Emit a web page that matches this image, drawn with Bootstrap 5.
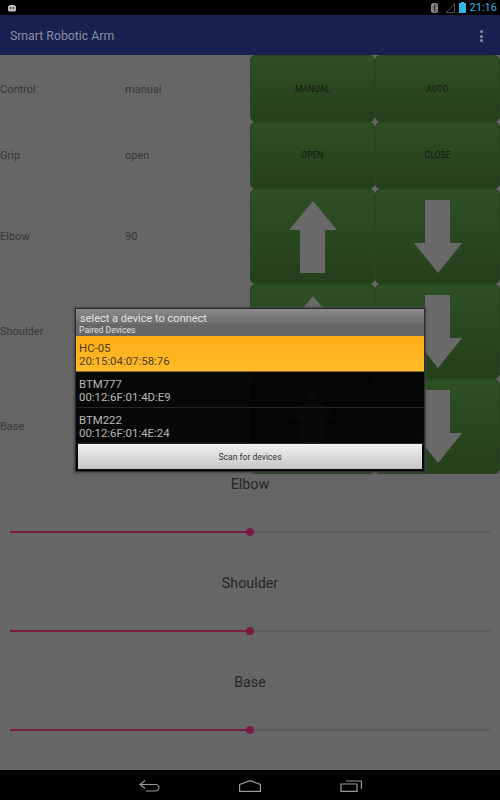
<!DOCTYPE html>
<html lang="en">
<head>
  <meta charset="UTF-8">
  <title>Smart Robotic Arm</title>
  <link href="https://cdn.jsdelivr.net/npm/bootstrap@5.3.0/dist/css/bootstrap.min.css" rel="stylesheet">
  <style>
    html, body { height: 800px; overflow: hidden; }
    body { background: #666; font-family: Roboto, "Liberation Sans", sans-serif; color: #333; position: relative; }
    .status-bar { height: 15px; background: #000; color: #33b5e5; font-size: 11px; line-height: 15px; padding: 0 3px 0 7px; }
    .app-bar { height: 40px; background: #18214f; color: #8a8ea3; font-size: 12.3px; padding: 2px 17px 0 10px; }
    .menu-dot { width: 3px; height: 3px; border-radius: 50%; background: #8a8ea3; display: block; margin: 1.5px 0; }
    .main-area { height: 400px; }
    .label-col { width: 250px; flex: none; }
    .value-row { font-size: 11px; color: #363636; padding-top: 2px; }
    .value-row.first-row { padding-top: 4px; }
    .value-name { width: 125px; flex: none; }
    .pad-col { width: 250px; flex: none; }
    .pad-row { display: flex; }
    .pad-key { width: 125px; flex: none; border: 0; padding: 0; border-radius: 6px; background: linear-gradient(#2e5025, #243f1a); box-shadow: inset 0 0 0 1px #274520; color: #151515; font-size: 8.3px; letter-spacing: .2px; display: flex; align-items: center; justify-content: center; }
    .pad-key.key-text { padding-top: 2px; }
    .h-67 { height: 67px; }
    .h-95 { height: 95px; }
    .slider-zone { height: 315px; padding-top: 19px; }
    .slider-block { height: 99px; text-align: center; font-size: 14.3px; line-height: 20px; color: #262626; }
    .slider-track { height: 2px; margin: 37px 10px 0; background: #5a5a5a; position: relative; }
    .slider-fill { height: 2px; background: #7a1c42; }
    .slider-thumb { position: absolute; top: -3px; width: 8px; height: 8px; margin-left: -4px; border-radius: 50%; background: #7a1c42; }
    .nav-bar { height: 30px; background: #000; padding-top: 2px; }
    .nav-home { margin: 0 79px; }
    .picker { position: absolute; left: 75px; top: 308px; width: 350px; height: 164px; border: 1px solid #2a2a2a; box-shadow: 0 0 2px 1px #444; display: flex; flex-direction: column; }
    .picker-title { height: 15px; flex: none; background: linear-gradient(#8a8a8a, #6c6c6c); color: #e2e2e2; font-size: 11px; line-height: 20px; padding-left: 4px; }
    .picker-sub { height: 12px; flex: none; background: #666; color: #e2e2e2; font-size: 8.6px; line-height: 13px; padding-left: 3px; }
    .picker-item { height: 36px; flex: none; color: #b8b8b8; font-size: 11.4px; line-height: 13px; padding: 6px 3px 0; border-bottom: 1px solid #262626; background: rgba(0,0,0,.92); }
    .picker-item.chosen { background: linear-gradient(#ffad14, #ffbb27); color: #4a4030; border-bottom-color: #8a6d2c; }
    .picker-foot { flex: 1; background: rgba(0,0,0,.92); padding: 0 2px 2px; display: flex; }
    .scan-btn { flex: 1; border: 0; padding: 1px 0 0; background: linear-gradient(#f0f0f0, #c6c6c6); color: #333; font-size: 8.6px; }
  </style>
</head>
<body>

<div class="status-bar d-flex align-items-center justify-content-between">
  <svg width="10" height="8" viewBox="0 0 10 8"><path d="M1 2h1l.5-1h5l.5 1h1v4.500l-1 1H2l-1-1z" fill="#bdbdbd"/><circle cx="3.5" cy="4" r=".8" fill="#000"/><circle cx="6.5" cy="4" r=".8" fill="#000"/></svg>
  <div class="d-flex align-items-center">
    <svg width="7" height="10" viewBox="0 0 7 10" class="me-2"><rect x="0" y="0" width="7" height="10" rx="2.5" fill="#8c8c8c"/><path d="M1.5 3l4 4-2 2V1l2 2-4 4" fill="none" stroke="#222" stroke-width=".7"/></svg>
    <svg width="9" height="10" viewBox="0 0 9 10"><path d="M.5 9.5L8.5.5v9z" fill="none" stroke="#555"/></svg>
    <svg width="7" height="11" viewBox="0 0 7 11" class="ms-1 me-1"><path d="M2 0h3v1h2v10H0V1h2z" fill="#33b5e5"/></svg>
    <span>21:16</span>
  </div>
</div>

<div class="app-bar d-flex align-items-center justify-content-between">
  <span>Smart Robotic Arm</span>
  <span><i class="menu-dot"></i><i class="menu-dot"></i><i class="menu-dot"></i></span>
</div>

<div class="main-area d-flex">
  <div class="label-col">
    <div class="value-row first-row d-flex align-items-center h-67"><span class="value-name">Control</span><span>manual</span></div>
    <div class="value-row d-flex align-items-center h-67"><span class="value-name">Grip</span><span>open</span></div>
    <div class="value-row d-flex align-items-center h-95"><span class="value-name">Elbow</span><span>90</span></div>
    <div class="value-row d-flex align-items-center h-95"><span class="value-name">Shoulder</span><span>90</span></div>
    <div class="value-row d-flex align-items-center h-95"><span class="value-name">Base</span><span>90</span></div>
  </div>
  <div class="pad-col">
    <div class="pad-row h-67"><button class="pad-key key-text">MANUAL</button><button class="pad-key key-text">AUTO</button></div>
    <div class="pad-row h-67"><button class="pad-key">OPEN</button><button class="pad-key">CLOSE</button></div>
    <div class="pad-row h-95">
      <button class="pad-key"><svg width="48" height="72" viewBox="0 0 48 72"><path d="M24 0L48 29H36V72H11V29H0z" fill="#696969"/></svg></button>
      <button class="pad-key"><svg width="48" height="73" viewBox="0 0 48 73"><path d="M11 0H36V43H48L24 73 0 43H11z" fill="#696969"/></svg></button>
    </div>
    <div class="pad-row h-95">
      <button class="pad-key"><svg width="48" height="72" viewBox="0 0 48 72"><path d="M24 0L48 29H36V72H11V29H0z" fill="#696969"/></svg></button>
      <button class="pad-key"><svg width="48" height="73" viewBox="0 0 48 73"><path d="M11 0H36V43H48L24 73 0 43H11z" fill="#696969"/></svg></button>
    </div>
    <div class="pad-row h-95">
      <button class="pad-key"><svg width="48" height="72" viewBox="0 0 48 72"><path d="M24 0L48 29H36V72H11V29H0z" fill="#696969"/></svg></button>
      <button class="pad-key"><svg width="48" height="73" viewBox="0 0 48 73"><path d="M11 0H36V43H48L24 73 0 43H11z" fill="#696969"/></svg></button>
    </div>
  </div>
</div>

<div class="slider-zone">
  <div class="slider-block">Elbow<div class="slider-track"><div class="slider-fill" style="width:240px"></div><div class="slider-thumb" style="left:240px"></div></div></div>
  <div class="slider-block">Shoulder<div class="slider-track"><div class="slider-fill" style="width:240px"></div><div class="slider-thumb" style="left:240px"></div></div></div>
  <div class="slider-block">Base<div class="slider-track"><div class="slider-fill" style="width:240px"></div><div class="slider-thumb" style="left:240px"></div></div></div>
</div>

<div class="nav-bar d-flex align-items-center justify-content-center">
  <svg width="21" height="12" viewBox="0 0 21 12" fill="none" stroke="#999" stroke-width="1.1"><path d="M6 .5L1 4.5l5 4M1 4.5h15.500q3.500 0 3.500 3t-3.500 3.500H7"/></svg>
  <svg class="nav-home" width="22" height="12" viewBox="0 0 22 12" fill="none" stroke="#999" stroke-width="1.2"><path d="M.6 4.5L11 .6l10.400 3.900v6.900H.6z"/></svg>
  <svg width="22" height="12" viewBox="0 0 22 12" fill="none" stroke="#999" stroke-width="1.2"><path d="M1 4h16v7.400H1zM6 1h15.400v8"/></svg>
</div>

<div class="picker">
  <div class="picker-title">select a device to connect</div>
  <div class="picker-sub">Paired Devices</div>
  <div class="picker-item chosen">HC-05<br>20:15:04:07:58:76</div>
  <div class="picker-item">BTM777<br>00:12:6F:01:4D:E9</div>
  <div class="picker-item">BTM222<br>00:12:6F:01:4E:24</div>
  <div class="picker-foot"><button class="scan-btn">Scan for devices</button></div>
</div>

<script src="https://cdn.jsdelivr.net/npm/bootstrap@5.3.0/dist/js/bootstrap.bundle.min.js"></script>
</body>
</html>
